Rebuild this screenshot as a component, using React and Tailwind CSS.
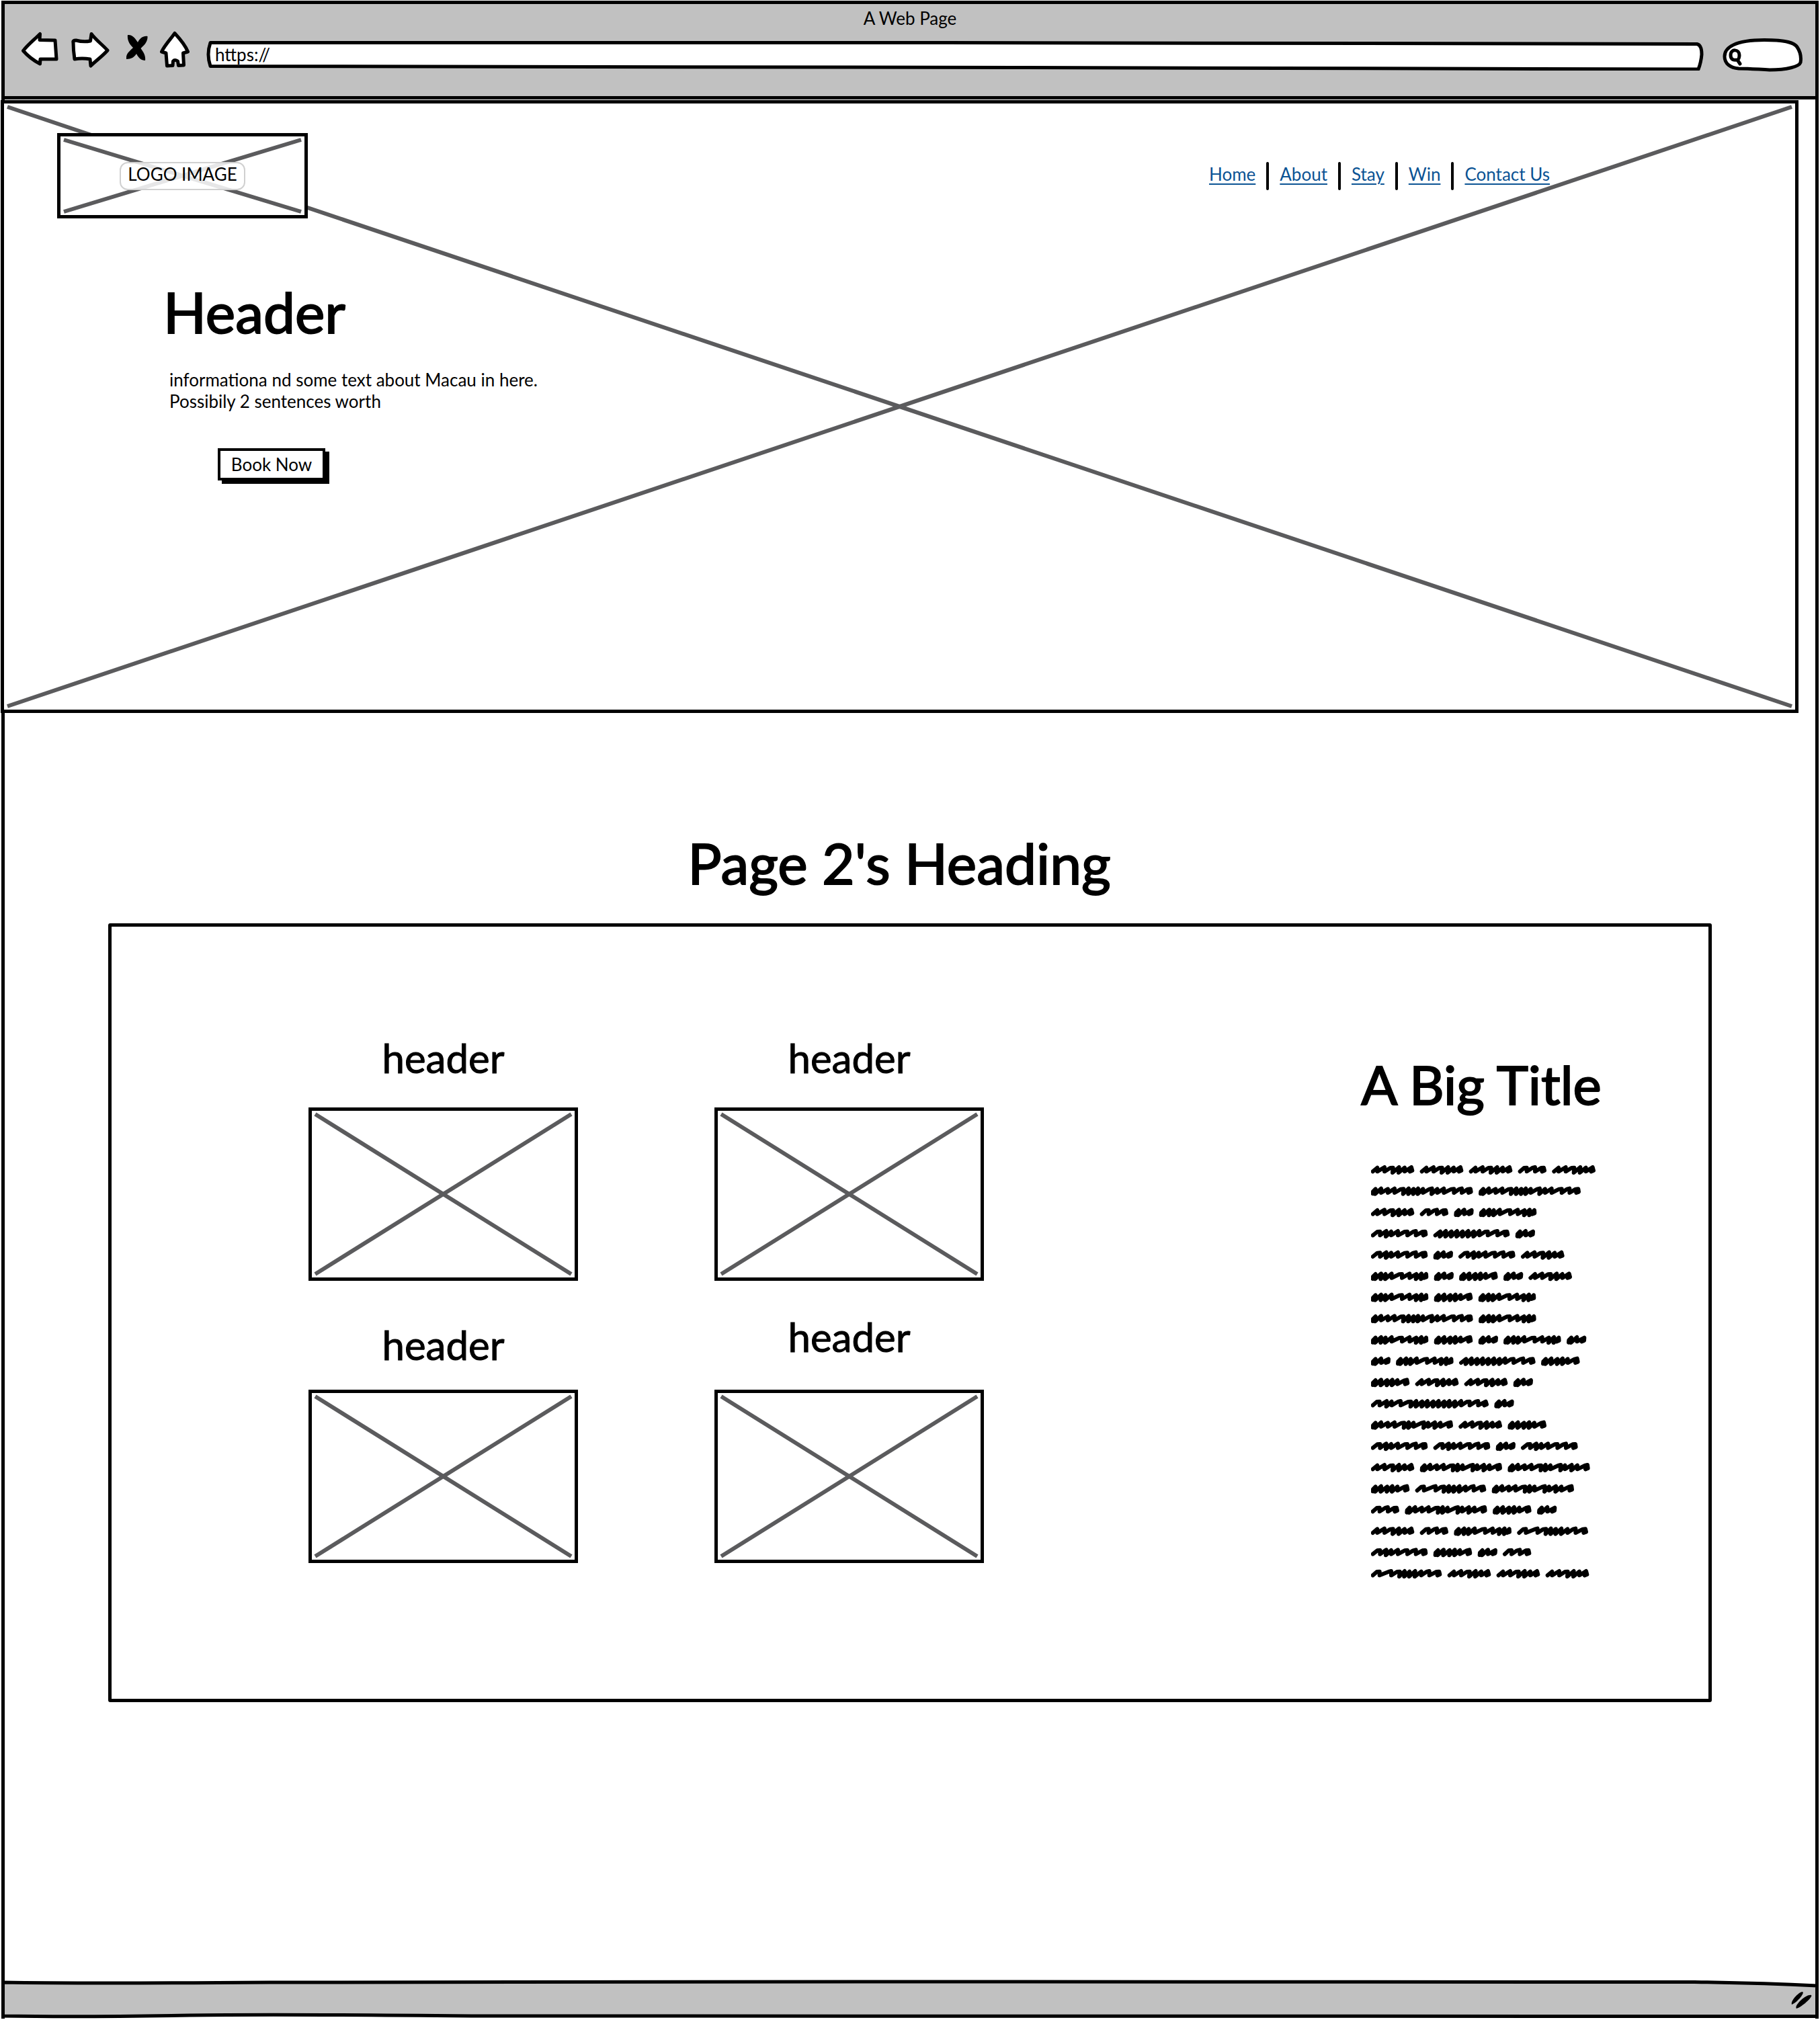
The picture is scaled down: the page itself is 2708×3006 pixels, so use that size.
import React from "react";

const sketchText = "[-webkit-text-stroke:2px_black] [stroke-linejoin:round]";

// Peak positions of each scribbled word, in thirds of a pixel.
const WORDS = {
  a: { w: 193, peaks: [28, 60, 98, 125, 150, 180] },
  b: { w: 126, peaks: [38, 75, 114] },
  c: { w: 86, peaks: [20, 45, 78] },
  d: { w: 172, peaks: [20, 45, 72, 95, 118, 160] },
  e: { w: 256, peaks: [20, 45, 65, 92, 138, 172, 202, 225, 246] },
  f: { w: 253, peaks: [40, 68, 90, 120, 162, 200, 242] },
  g: { w: 340, peaks: [30, 55, 80, 105, 130, 155, 180, 205, 242, 285, 328] },
  h: { w: 366, peaks: [20, 45, 75, 105, 148, 168, 190, 236, 255, 285, 310, 355] },
  i: { w: 316, peaks: [38, 90, 128, 150, 172, 197, 224, 260, 304] },
  j: { w: 455, peaks: [20, 45, 75, 105, 145, 168, 190, 210, 232, 272, 296, 325, 370, 405, 444] },
  k: { w: 525, peaks: [38, 70, 92, 132, 178, 202, 228, 252, 278, 302, 327, 350, 375, 402, 440, 478, 512] },
};

const LINES = [
  "aaaba", "jj", "abce", "fgc", "fcfa", "ecdca", "ede", "je", "edcec", "cegd",
  "daac", "kc", "had", "ffcf", "ahh", "dih", "bhdc", "abei", "fdcb", "iaaa",
];

function wordPath({ w, peaks }, x) {
  const blob = peaks[0] < 25;
  let d = `M${x + 8} ${blob ? 32 : 28}`;
  if (blob) d += ` L${x + 9} 22`;
  peaks.forEach((p, i) => {
    const last = i === peaks.length - 1;
    const gap = last ? 20 : peaks[i + 1] - p;
    const prev = i === 0 ? p : p - peaks[i - 1];
    if (prev > 34) d += ` L${x + p - 12} 12`;
    d += ` L${x + p} ${i % 2 ? 9 : 11}`;
    d += last ? ` L${x + w - 9} 24 L${x + w - 20} 28` : ` L${x + p - (gap < 28 ? 2 : 0)} ${gap < 28 ? 33 : 28}`;
  });
  return d;
}

function Scribbles() {
  return (
    <svg viewBox="0 0 1044 1848" className="w-[348px] h-[616px]" role="img" aria-label="Placeholder paragraph" fill="none" stroke="black" strokeWidth="18" strokeLinecap="round" strokeLinejoin="round">
      {LINES.map((line, row) => {
        let x = 0;
        return (
          <g key={row} transform={`translate(0 ${Math.round(row * 94.9)})`}>
            {line.split("").map((k, i) => {
              const d = wordPath(WORDS[k], x);
              x += WORDS[k].w + 26;
              return <path key={i} d={d} />;
            })}
          </g>
        );
      })}
    </svg>
  );
}

function Cross() {
  return (
    <svg className="absolute inset-[5px] w-[calc(100%-10px)] h-[calc(100%-10px)] overflow-visible" stroke="#5b5b5d" strokeWidth="6" aria-hidden="true">
      <line x1="0" y1="0" x2="100%" y2="100%" />
      <line x1="0" y1="100%" x2="100%" y2="0" />
    </svg>
  );
}

function NavButton({ label, className, viewBox, children }) {
  return (
    <button type="button" aria-label={label} className={className}>
      <svg viewBox={viewBox} className="block h-[57px] w-full" fill="white" stroke="black" strokeWidth="5" strokeLinejoin="round" strokeLinecap="round">
        {children}
      </svg>
    </button>
  );
}

function TitleBar() {
  return (
    <header className="-mx-[5px] h-[147px] border-5 border-black bg-[#c1c1c1]">
      <p className="mt-[5px] text-center text-[26px] leading-8">A Web Page</p>
      <div className="mt-[3px] flex items-start pl-[25px] pr-[19px]">
        <NavButton label="Back" className="w-[55px] shrink-0" viewBox="32 46 55 57">
          <path d="M34.500 75.500 C42 66 50 60 59.500 50.500 L59 59.500 L82 60 L84 88 L60 88 L59.500 95 C50 90 41 83 34.500 75.500Z" />
        </NavButton>
        <NavButton label="Forward" className="ml-[19px] w-[57px] shrink-0" viewBox="106 46 57 57">
          <path d="M109 63 Q108 60 113 60 Q124 63 134.500 61 L136 50.500 C143 60 153 67 160 75 C152 84 143 90 135 98 L134 88 Q122 86 111 88 Q109 75 109 63Z" />
        </NavButton>
        <NavButton label="Stop" className="ml-[25px] w-[32px] shrink-0" viewBox="188 46 32 57">
          <path fill="black" stroke="none" d="M190 52 C197 51 202 58 205 63 C208 57 213 53 219.500 54 C220 62 215 67 209.500 72 C213 77 217 82 216 90 C210 90 206 86 203 80 C200 85 195 88 188 88 C187 80 193 76 198 71 C193 66 189 60 190 52Z" />
        </NavButton>
        <NavButton label="Home" className="ml-[18px] w-[45px] shrink-0" viewBox="238 46 45 57">
          <path d="M260 49.500 C266 56 276 68 279.500 77 L272.500 79 L273.500 97 L265.500 97.500 L264.500 91 Q260 88 257.500 91 L257 97.500 L248.500 98 L247 79 L240.500 77 C245 67 254 58 260 49.500Z" />
        </NavButton>
        <div className="relative ml-6 mt-[15px] h-11 flex-1">
          <svg viewBox="0 0 2226 44" preserveAspectRatio="none" className="absolute inset-0 h-full w-full" fill="white" stroke="black" strokeWidth="5" strokeLinejoin="round" aria-hidden="true">
            <path d="M6 2.500 H1100 L2216 4.500 Q2223 6 2223 20 Q2222 32 2218 42 L1200 39.500 L6 37.500 Q0 20 6 2.500Z" />
          </svg>
          <input aria-label="Address" defaultValue="https://" className="relative block h-10 w-full bg-transparent pl-[13px] text-[26px] leading-8 outline-none" />
        </div>
        <div className="relative ml-7 mt-[11px] h-[50px] w-[119px] shrink-0">
          <svg viewBox="0 0 119 50" className="absolute inset-0 h-full w-full" fill="white" stroke="black" strokeWidth="5" strokeLinecap="round" strokeLinejoin="round" aria-hidden="true">
            <path d="M3 27 C3 14 18 2.500 62 2.500 C96 2.500 107 7 111 13 C117 22 117 30 116 36 C114 42 96 47 70 47 C50 46 40 45 24 45 C12 44 3 38 3 27Z" />
            <path fill="none" d="M12 25 C12 15 25 16 25 25 C25 30 24 31 22 32 C17 33 12 32 12 25Z M22 32 L26 38" />
          </svg>
          <input type="search" aria-label="Search" className="relative block h-full w-full bg-transparent pl-8 pr-3 text-[26px] outline-none" />
        </div>
      </div>
    </header>
  );
}

const LINKS = ["Home", "About", "Stay", "Win", "Contact Us"];

function Hero() {
  return (
    <section className="relative -ml-[6px] mr-[25px] mt-px h-[912px] border-5 border-black bg-white">
      <Cross />
      <div className="relative flex items-center justify-between pl-[79px] pr-[365px] pt-11">
        <div className="relative flex h-[127px] w-[373px] items-center justify-center border-5 border-black bg-white">
          <Cross />
          <span className="relative rounded-xl border-2 border-[#d0d0d0] bg-white/85 px-[10px] pb-[6px] text-[26px] leading-8">LOGO IMAGE</span>
        </div>
        <nav aria-label="Main" className="flex items-center text-[26px] leading-8 text-[#0b5394]">
          {LINKS.map((l, i) => (
            <React.Fragment key={l}>
              {i > 0 && <span aria-hidden="true" className="mx-4 h-[42px] w-1 rounded-full bg-black" />}
              <a href="#" className="pb-[6px] underline decoration-2 underline-offset-4">{l}</a>
            </React.Fragment>
          ))}
        </nav>
      </div>
      <div className="relative pl-[237px] pt-[91px]">
        <h1 className={`text-[84px] leading-[96px] ${sketchText}`}>Header</h1>
        <p className="ml-[9px] mt-[37px] text-[26px] leading-8">
          informationa nd some text about Macau in here.
          <br />
          Possibily 2 sentences worth
        </p>
        <button type="button" className="ml-[81px] mt-[54px] block h-12 w-[160px] border-4 border-black bg-white text-[26px] leading-8 shadow-[6px_5px_0_black]">Book Now</button>
      </div>
    </section>
  );
}

function Tile({ gap = "gap-[42px]" }) {
  return (
    <figure className={`flex flex-col items-center ${gap}`}>
      <h3 className="text-[60px] leading-[64px] [-webkit-text-stroke:1px_black]">header</h3>
      <div className="relative h-[258px] w-[401px] border-5 border-black bg-white">
        <Cross />
      </div>
    </figure>
  );
}

function Main() {
  return (
    <main className="px-[154px] pt-[175px] pb-24">
      <h2 className={`pr-8 text-center text-[84px] leading-[96px] ${sketchText}`}>Page 2's Heading</h2>
      <section className="mt-[42px] flex justify-between rounded-[3px] border-5 border-black pb-[178px] pl-[293px] pr-[158px]">
        <div className="grid grid-cols-2 content-start items-end gap-x-[203px] gap-y-[51px] pt-[163px]">
          <Tile />
          <Tile />
          <Tile gap="gap-[35px]" />
          <Tile gap="gap-[47px]" />
        </div>
        <aside className="flex w-[360px] flex-col items-center pt-[186px]">
          <h2 className={`whitespace-nowrap text-[80px] leading-[96px] ${sketchText}`}>A Big Title</h2>
          <div className="ml-4 mt-[73px] self-start">
            <Scribbles />
          </div>
        </aside>
      </section>
    </main>
  );
}

function StatusBar() {
  return (
    <footer className="relative -mx-[5px] mt-auto h-[58px]">
      <svg viewBox="0 0 2705 58" preserveAspectRatio="none" className="absolute inset-0 h-full w-full" fill="#c1c1c1" stroke="black" strokeWidth="5" strokeLinejoin="round" aria-hidden="true">
        <path d="M2.500 4 Q120 6 400 4 T1300 3 T2520 3.500 Q2620 5 2702.500 9 V54.500 Q1300 56 700 54 Q400 51 280 53 Q120 56 2.500 54Z" />
      </svg>
      <svg viewBox="0 0 32 27" className="absolute bottom-[14px] right-[9px] h-[27px] w-8" aria-hidden="true">
        <path d="M1 20 C-1 14 12 1 17 1 C21 3 8 18 1 20Z M8 26 C4 22 22 4 30 6 C33 9 14 25 8 26Z" />
      </svg>
    </footer>
  );
}

export default function App() {
  return (
    <div className="min-h-screen bg-white px-[2px] pb-[2px] pt-px font-['Lato',sans-serif] text-black flex flex-col">
      <div className="flex flex-1 flex-col border-x-5 border-black">
        <TitleBar />
        <Hero />
        <Main />
        <StatusBar />
      </div>
    </div>
  );
}
